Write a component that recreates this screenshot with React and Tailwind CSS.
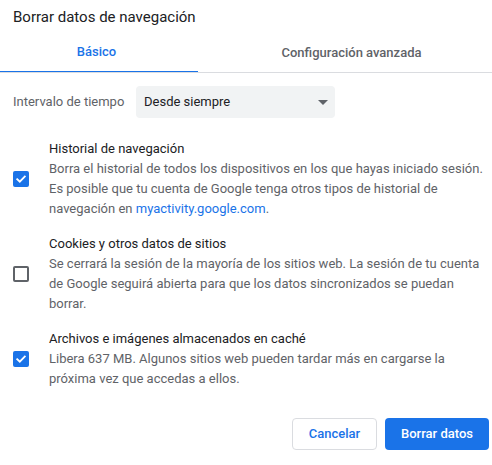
import React from "react";

const Check = ({ checked }) =>
  checked ? (
    <span className="flex h-4 w-4 items-center justify-center rounded-[2px] bg-[#1a73e8]">
      <svg width="12" height="12" viewBox="0 0 12 12" fill="none">
        <path d="M2.2 6.2 L4.8 8.7 L9.8 3.6" stroke="#fff" strokeWidth="1.8" strokeLinecap="square" />
      </svg>
    </span>
  ) : (
    <span className="block h-4 w-4 rounded-[2px] border-2 border-[#5f6368]" />
  );

const Item = ({ checked, title, children }) => (
  <div className="flex items-center">
    <div className="flex w-[49px] shrink-0 pl-[13px]">
      <Check checked={checked} />
    </div>
    <div className="flex-1 pr-2">
      <div className="text-[13px] leading-[20px] text-[#202124]">{title}</div>
      <div className="text-[13px] leading-[20px] text-[#5f6368]">{children}</div>
    </div>
  </div>
);

export default function App() {
  return (
    <div
      className="relative h-[465px] w-[492px] overflow-hidden bg-white"
      style={{ fontFamily: "Roboto, 'Liberation Sans', sans-serif" }}
    >
      {/* titulo */}
      <div className="pl-[13px] pt-[7px] text-[15px] leading-[20px] text-[#202124]">
        Borrar datos de navegación
      </div>

      {/* pestañas */}
      <div className="flex h-[46px] overflow-hidden border-b border-[#dadce0]">
        <div className="-mb-px flex w-[198px] shrink-0 items-center justify-center border-b-2 border-[#1a73e8] pt-[6px] pr-[5px] text-[13px] font-medium text-[#1a73e8]">
          Básico
        </div>
        <div className="flex w-[307px] shrink-0 items-center justify-center pt-[6px] text-[13px] font-medium text-[#5f6368]">
          Configuración avanzada
        </div>
      </div>

      {/* intervalo */}
      <div className="mt-[13px] flex items-center">
        <div className="w-[136px] shrink-0 pl-[13px] text-[13px] text-[#5f6368]">
          Intervalo de tiempo
        </div>
        <div className="flex h-[32px] w-[199px] items-center justify-between rounded-[4px] bg-[#f1f3f4] pl-[8px] pr-[7px] text-[13px] text-[#202124]">
          <span>Desde siempre</span>
          <svg width="10" height="5" viewBox="0 0 10 5">
            <path d="M0 0 L10 0 L5 5 Z" fill="#5f6368" />
          </svg>
        </div>
      </div>

      {/* opciones */}
      <div className="mt-[21px] flex flex-col gap-[15px]">
        <Item checked title="Historial de navegación">
          Borra el historial de todos los dispositivos en los que hayas iniciado sesión. Es
          posible que tu cuenta de Google tenga otros tipos de historial de navegación en{" "}
          <span className="text-[#1a73e8]">myactivity.google.com</span>.
        </Item>
        <Item checked={false} title="Cookies y otros datos de sitios">
          Se cerrará la sesión de la mayoría de los sitios web. La sesión de tu cuenta de
          Google seguirá abierta para que los datos sincronizados se puedan borrar.
        </Item>
        <Item checked title="Archivos e imágenes almacenados en caché">
          Libera 637 MB. Algunos sitios web pueden tardar más en cargarse la próxima vez que
          accedas a ellos.
        </Item>
      </div>

      {/* botones */}
      <div className="mt-[29px] flex justify-end gap-[8px] pr-[3px]">
        <button className="h-[32px] w-[85px] rounded-[4px] border border-[#dadce0] bg-white text-[13px] font-medium text-[#1a73e8]">
          Cancelar
        </button>
        <button className="h-[32px] w-[104px] rounded-[4px] bg-[#1a73e8] text-[13px] font-medium text-white">
          Borrar datos
        </button>
      </div>
    </div>
  );
}
